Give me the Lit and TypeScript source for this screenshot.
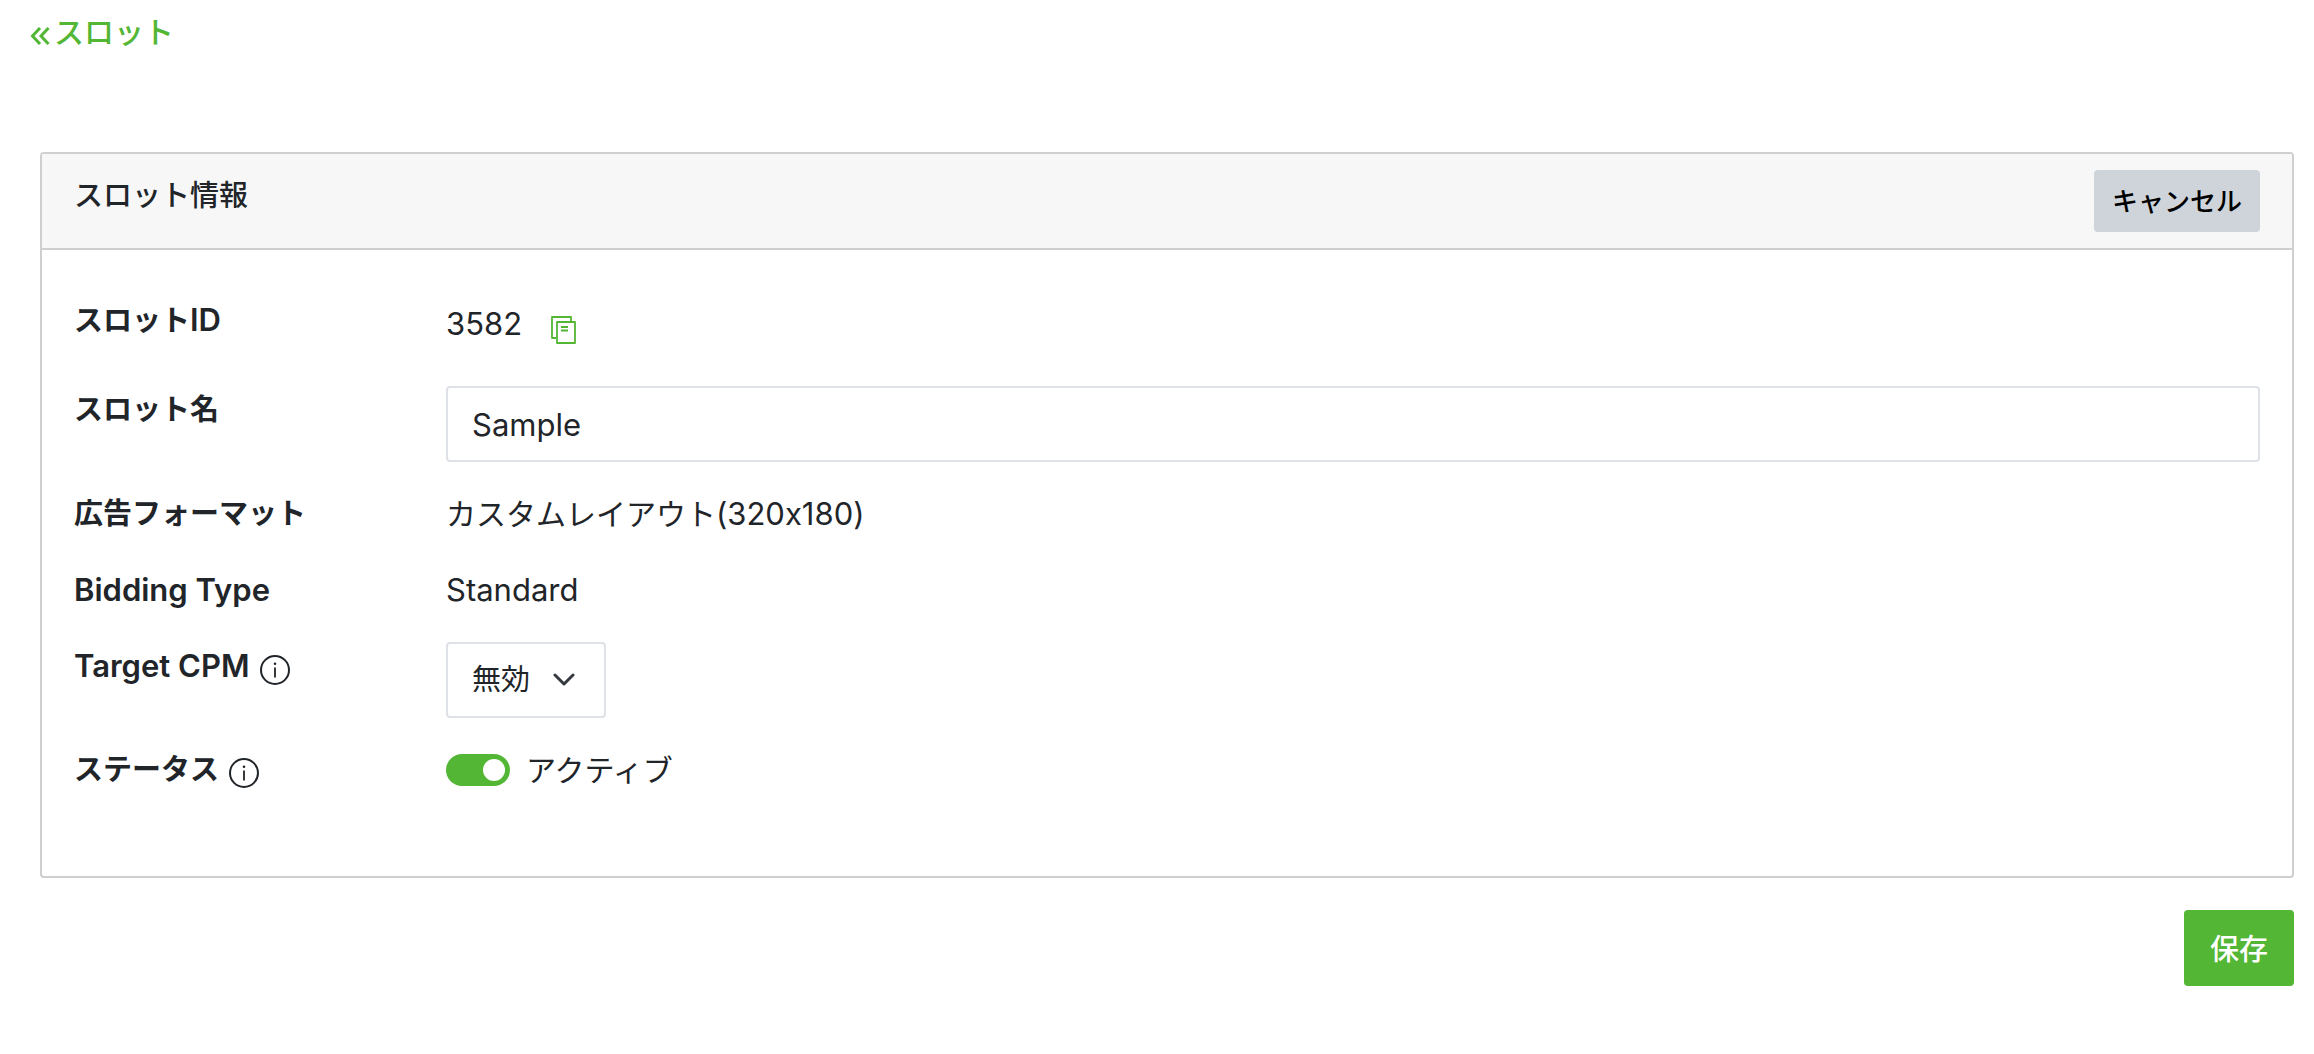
import { LitElement, html, css } from "lit";
import { customElement, state } from "lit/decorators.js";

const infoIcon = html`<svg class="info" viewBox="0 0 30 30" aria-hidden="true">
  <circle cx="15" cy="15" r="14" fill="none" stroke="currentColor" stroke-width="2" />
  <path d="M15 12.5v10" stroke="currentColor" stroke-width="1.8" />
  <circle cx="15" cy="8.8" r="1.3" fill="currentColor" />
</svg>`;

@customElement("app-root")
export class AppRoot extends LitElement {
  static styles = css`
    :host {
      display: block;
      color: #212529;
      font-family: Inter, "Noto Sans CJK JP", sans-serif;
      font-feature-settings: "calt" 0;
      font-size: 30px;
      line-height: 48px;
    }
    * {
      box-sizing: border-box;
    }
    .page {
      display: flex;
      flex-direction: column;
      padding: 8px 20px 68px 30px;
    }
    .back {
      display: flex;
      align-items: center;
      align-self: flex-start;
      gap: 4px;
      color: #53b635;
      text-decoration: none;
      font-weight: 500;
    }
    .chevrons {
      width: 20px;
      height: 18px;
      margin-top: 8px;
    }
    .card {
      margin: 96px 0 32px 10px;
      border: 2px solid #cfcfcf;
      border-radius: 4px;
    }
    .head {
      display: flex;
      justify-content: space-between;
      align-items: flex-start;
      padding: 16px 32px;
      border-bottom: 2px solid #cfcfcf;
      background: #f7f7f7;
    }
    .title {
      margin: 2px 0 0;
      font-size: 29px;
      font-weight: 500;
    }
    button {
      border: 0;
      border-radius: 4px;
      font-family: inherit;
      cursor: pointer;
    }
    .cancel {
      height: 62px;
      padding: 0 18px 4px;
      background: #ced4da;
      color: #000;
      font-size: 26px;
      font-weight: 500;
    }
    .rows {
      display: grid;
      grid-template-columns: 340px 1fr;
      column-gap: 32px;
      row-gap: 28px;
      padding: 46px 32px 82px;
    }
    .label {
      height: 48px;
      font-size: 29px;
      font-weight: 600;
    }
    .latin {
      font-size: 31px;
    }
    .value {
      display: flex;
      align-items: center;
    }
    .id {
      align-items: flex-start;
      padding: 4px 0 10px;
    }
    .copy {
      display: flex;
      margin-left: 28px;
      padding: 16px 0 0;
      background: none;
      color: #53b635;
    }
    .copy svg {
      width: 26px;
      height: 28px;
    }
    .text {
      width: 100%;
      height: 76px;
      padding: 0 24px;
      border: 2px solid #dee2e6;
      border-radius: 4px;
      background: #fff;
      color: inherit;
      font: inherit;
      font-size: 31px;
    }
    .select {
      display: grid;
      align-items: center;
    }
    .select select {
      grid-area: 1 / 1;
      width: 160px;
      height: 76px;
      padding: 0 24px;
      border: 2px solid #dee2e6;
      border-radius: 4px;
      background: #fff;
      color: inherit;
      font: inherit;
      font-size: 29px;
      appearance: none;
    }
    .select svg {
      grid-area: 1 / 1;
      justify-self: end;
      width: 24px;
      height: 14px;
      margin-right: 30px;
      pointer-events: none;
    }
    .info {
      width: 30px;
      height: 30px;
      margin-left: 10px;
      vertical-align: -8px;
    }
    .switch {
      display: flex;
      align-items: center;
      gap: 16px;
    }
    .switch input {
      appearance: none;
      display: flex;
      width: 64px;
      height: 32px;
      margin: 0;
      padding: 5px;
      border-radius: 16px;
      background: #ced4da;
    }
    .switch input::before {
      content: "";
      width: 22px;
      height: 22px;
      border-radius: 50%;
      background: #fff;
    }
    .switch input:checked {
      justify-content: flex-end;
      background: #53b635;
    }
    .save {
      align-self: flex-end;
      height: 76px;
      padding: 0 26px 2px;
      background: #53b635;
      color: #fff;
      font-size: 29px;
      font-weight: 500;
    }
  `;

  @state() private active = true;

  private toggle(e: Event) {
    this.active = (e.target as HTMLInputElement).checked;
  }

  render() {
    return html`<main class="page" lang="ja">
      <a class="back" href="#slots">
        <svg class="chevrons" viewBox="0 0 20 18" fill="none" stroke="currentColor" stroke-width="3" aria-hidden="true">
          <path d="M10 1 2.500 9l7.500 8M18.500 1 11 9l7.500 8" />
        </svg>
        <span>スロット</span>
      </a>
      <section class="card">
        <header class="head">
          <h1 class="title">スロット情報</h1>
          <button class="cancel" type="button">キャンセル</button>
        </header>
        <div class="rows">
          <span class="label">スロット<span class="latin">ID</span></span>
          <div class="value id">
            <span class="latin">3582</span>
            <button class="copy" type="button" aria-label="コピー">
              <svg viewBox="0 0 26 28" fill="none" stroke="currentColor" stroke-width="1.8" stroke-linejoin="round" aria-hidden="true">
                <path d="M6 22H2V1h19v5" />
                <path d="M7 6h18v21H7z" />
                <path d="M11 11h7M11 14.500h7" />
              </svg>
            </button>
          </div>
          <label class="label" for="name">スロット名</label>
          <div class="value"><input class="text" id="name" type="text" value="Sample" /></div>
          <span class="label">広告フォーマット</span>
          <div class="value">カスタムレイアウト<span class="latin">(320x180)</span></div>
          <span class="label"><span class="latin">Bidding Type</span></span>
          <div class="value latin">Standard</div>
          <label class="label" for="cpm"><span class="latin">Target CPM</span>${infoIcon}</label>
          <div class="value">
            <div class="select">
              <select id="cpm">
                <option>無効</option>
                <option>有効</option>
              </select>
              <svg viewBox="0 0 24 14" fill="none" stroke="#343a40" stroke-width="3" stroke-linecap="round" stroke-linejoin="round" aria-hidden="true">
                <path d="m3 2 9 9 9-9" />
              </svg>
            </div>
          </div>
          <span class="label">ステータス${infoIcon}</span>
          <div class="value">
            <label class="switch">
              <input type="checkbox" role="switch" .checked=${this.active} @change=${this.toggle} />
              <span>アクティブ</span>
            </label>
          </div>
        </div>
      </section>
      <button class="save" type="button">保存</button>
    </main>`;
  }
}
